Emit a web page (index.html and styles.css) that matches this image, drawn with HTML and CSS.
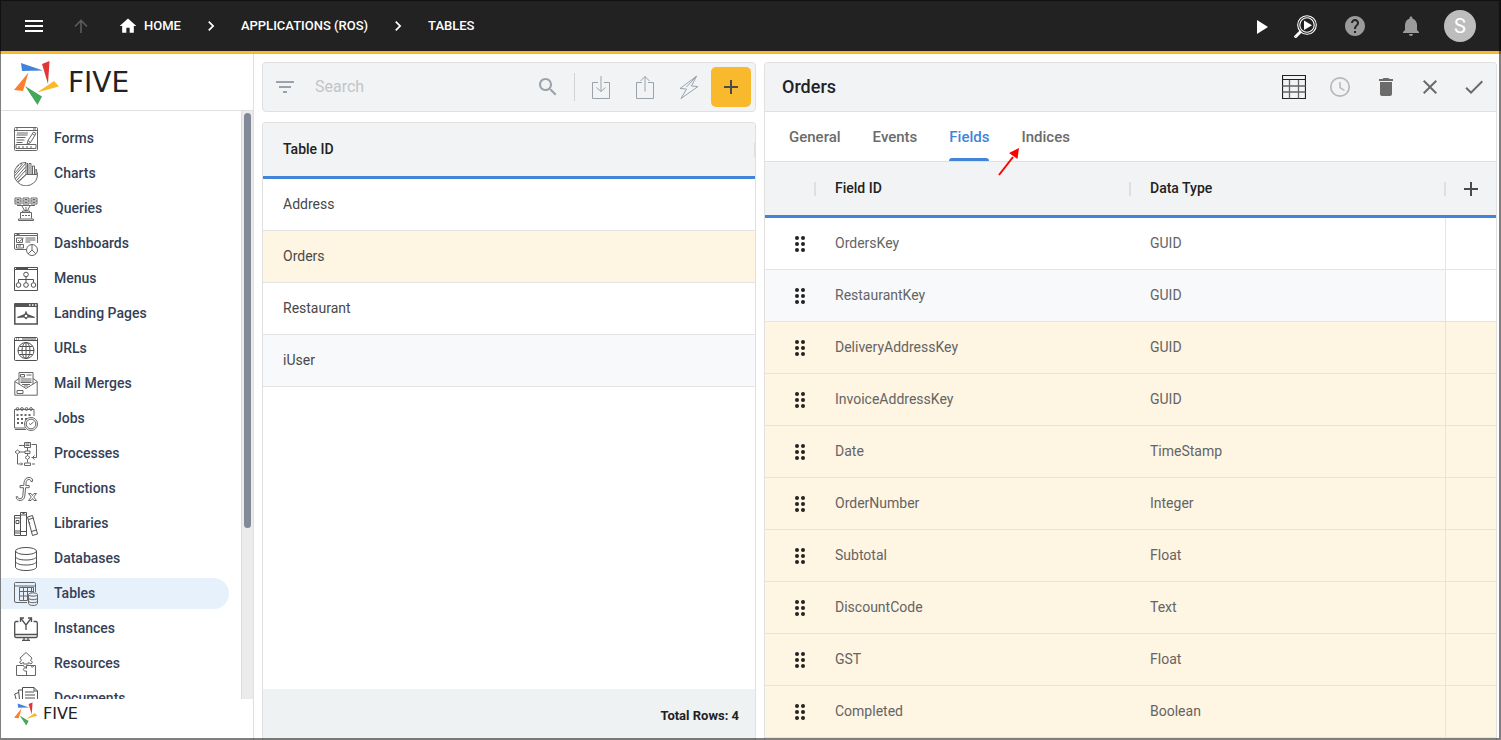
FILE: index.html
```html
<!DOCTYPE html>
<html lang="en">
<head>
<meta charset="utf-8">
<title>Five - Tables</title>
<link rel="stylesheet" href="styles.css">
</head>
<body>
<svg class="defs" aria-hidden="true">
  <symbol id="star" viewBox="0 0 46 46">
    <path fill="#4285d8" d="M7 3 29 10.500 8 11z"/>
    <path fill="#e03636" d="M28 4 35.500 1 34 24z"/>
    <path fill="#f8b92e" d="M23 32.500 40 21 45 26.500z"/>
    <path fill="#43a85a" d="M11 26 28 36.500 23.500 45z"/>
    <path fill="#fb7f2c" d="M14.500 12.500 0 30 9 31z"/>
  </symbol>
  <symbol id="grip" viewBox="0 0 10 16">
    <circle cx="2" cy="2" r="2"/><circle cx="8" cy="2" r="2"/><circle cx="2" cy="8" r="2"/><circle cx="8" cy="8" r="2"/><circle cx="2" cy="14" r="2"/><circle cx="8" cy="14" r="2"/>
  </symbol>
</svg>

<header class="topbar">
  <button class="icon-btn" aria-label="Menu"><svg class="i24 fill" viewBox="0 0 24 24"><path d="M3 18h18v-2H3v2zm0-5h18v-2H3v2zm0-7v2h18V6H3z"/></svg></button>
  <button class="icon-btn dim" aria-label="Up"><svg class="i24 line" viewBox="0 0 24 24"><path d="M12 19V7M6 12.500 12 6.500l6 6" stroke-width="1.600"/></svg></button>
  <nav class="crumbs" aria-label="Breadcrumb">
    <a href="#" class="home"><svg class="i20 fill" viewBox="0 0 24 24"><path d="M10 20v-6h4v6h5v-8h3L12 3 2 12h3v8z"/></svg>HOME</a>
    <svg class="i20 fill" viewBox="0 0 24 24"><path d="M10 6 8.590 7.410 13.170 12l-4.580 4.590L10 18l6-6z"/></svg>
    <a href="#">APPLICATIONS (ROS)</a>
    <svg class="i20 fill" viewBox="0 0 24 24"><path d="M10 6 8.590 7.410 13.170 12l-4.580 4.590L10 18l6-6z"/></svg>
    <a href="#">TABLES</a>
  </nav>
  <div class="top-actions">
    <button class="icon-btn" aria-label="Run"><svg class="i24 fill" viewBox="0 0 24 24"><path d="M8 6v14l11-7z"/></svg></button>
    <button class="icon-btn" aria-label="Inspect"><svg class="i24 line" viewBox="0 0 24 24"><circle cx="14" cy="11" r="9.300" stroke-width="1.100"/><circle cx="14" cy="11" r="7.200" stroke-width="1.100"/><path d="M7.500 16.500 1.500 22.500l1.200 1.300 6-6M8 17l-5 5.500" stroke-width="1.100"/><path d="M11 6.500v9.500l8-4.800z" fill="currentColor" stroke="none"/></svg></button>
    <button class="icon-btn muted" aria-label="Help"><svg class="i24 fill" viewBox="0 0 24 24"><path d="M12 2C6.480 2 2 6.480 2 12s4.480 10 10 10 10-4.480 10-10S17.520 2 12 2zm1 17h-2v-2h2v2zm2.070-7.750-.9.920C13.450 12.900 13 13.500 13 15h-2v-.5c0-1.100.450-2.100 1.170-2.830l1.240-1.260c.370-.360.590-.860.590-1.410 0-1.100-.9-2-2-2s-2 .9-2 2H8c0-2.210 1.790-4 4-4s4 1.790 4 4c0 .880-.360 1.680-.930 2.250z"/></svg></button>
    <button class="icon-btn muted" aria-label="Notifications"><svg class="i24 fill" viewBox="0 0 24 24"><path d="M12 22c1.100 0 2-.9 2-2h-4c0 1.100.890 2 2 2zm6-6v-5c0-3.070-1.640-5.640-4.500-6.320V4c0-.830-.670-1.500-1.500-1.500s-1.500.670-1.500 1.500v.680C7.630 5.360 6 7.920 6 11v5l-2 2v1h16v-1l-2-2z"/></svg></button>
    <button class="avatar" aria-label="Account">S</button>
  </div>
</header>

<div class="layout">
  <aside class="sidebar">
    <div class="brand"><svg class="star-lg"><use href="#star"/></svg><span class="word-lg">FIVE</span></div>
    <div class="nav-area">
      <nav class="nav" aria-label="Sections">
        <a href="#"><svg class="i24 thin" viewBox="0 0 24 24"><rect x=".5" y=".5" width="23" height="23" rx="1"/><path d="M.5 3.500h23M2 2h2M19 2h3M3 6h11M2.500 8h11M2.500 10.500h9M2.500 13h8M2.500 15.500h6M13 17.500l1-4L19.500 5l2.500 1.500-5.500 9zM14 13.500l2.500 2M18.500 7l2.500 1.500M2 17.500h20v4H2zM4 20h2M8 20h2M12 20h2M16 20h2"/></svg>Forms</a>
        <a href="#"><svg class="i24 thin" viewBox="0 0 24 24"><path d="M23.500 12.500A11.500 11.500 0 0 1 4 20.500L12 12.500z"/><path d="M3.500 20A11.500 11.500 0 0 1 12 .5v12zM1 11 8.500 2M.5 14 12 1M1.500 16.500 12 4.500M2.500 18.500 12 8M6 2l2-1M3 5l2-2"/><path d="M13.500 12V1M15 12V1.500h2V12M18.500 12V4h2v8M22 12V7l1.500 5z"/></svg>Charts</a>
        <a href="#"><svg class="i24 thin" viewBox="0 0 24 24"><path d="M1 1h6v6H1zM9 1h6v6H9zM17 1h6v6h-6zM1 4h6M9 4h6M17 4h6M2.500 2.500h3M10.500 2.500h3M18.500 2.500h3M2.500 5.500h3M10.500 5.500h3M18.500 5.500h3M3 8.500h18M8 9l2.500 4.500h3L16 9M12 10v4M6.500 21.500v-6h11v6M8.500 15v-1h7v1M8 18.500h2M11 18.500h2M14 18.500h2M4.500 22h15v1.500h-15z"/></svg>Queries</a>
        <a href="#"><svg class="i24 thin" viewBox="0 0 24 24"><path d="M12 17.500H2A1.500 1.500 0 0 1 .5 16V1.500H23.500V11M.5 3.500h23M2.500 2.500h3M2.500 6h6v4.500h-6zM4 8l1.500 1.500L9.500 6M2.500 12.500h7V16h-7zM4 14h3M11.500 6h10M11.500 8h10M11.500 10h5"/><circle cx="18" cy="18" r="5.500"/><path d="M18 12.500V18l-4 4M18 18l4 4"/></svg>Dashboards</a>
        <a href="#"><svg class="i24 thin dark" viewBox="0 0 24 24"><path d="M.5.5h23v23H.5zM.5 2.500h23M2 1.500h12M12 9.500v6M4.500 15.500v-3h15v3" /><circle cx="12" cy="7.500" r="2.300"/><circle cx="4.500" cy="18" r="2.300"/><circle cx="12" cy="18" r="2.300"/><circle cx="19.500" cy="18" r="2.300"/></svg>Menus</a>
        <a href="#"><svg class="i24 thin dark" viewBox="0 0 24 24"><path d="M.8 5v17h22.400V5" stroke-width="1.500"/><path d="M0 5V2a1 1 0 0 1 1-1h22a1 1 0 0 1 1 1v3z" fill="currentColor" stroke="none"/><path d="M15 3h1.500M18 3h1.500M21 3h1.500" stroke="#fff" stroke-width="1.500"/><path d="M12 8.500l1.500 3.500 7.500 3-.5 1-6.500-.5-2 2-2-2-6.500.5-.5-1 7.500-3z" fill="currentColor" stroke="none"/><circle cx="12" cy="14" r="1.300" fill="#fff" stroke="none"/></svg>Landing Pages</a>
        <a href="#"><svg class="i24 thin dark" viewBox="0 0 24 24"><rect x=".5" y=".5" width="23" height="23" rx="1"/><path d="M.5 3.500h23M2 2h1M4 2h1" /><path d="M8 2h14" stroke-width="2" stroke="#aaa"/><circle cx="12" cy="13.500" r="8"/><ellipse cx="12" cy="13.500" rx="4" ry="8"/><path d="M12 5.500v16M4 13.500h16M5.500 9.500h13M5.500 17.500h13"/></svg>URLs</a>
        <a href="#"><svg class="i24 thin" viewBox="0 0 24 24"><path d="M5 6.500.8 9.500v13.700h22.400V9.500L19 6.500M.8 9.500 12 16.500l11.200-7M5 12V.5h14V12M6.500 2.500h4v2.500h-4zM12.500 3h5M6.500 7h11M6.500 9h11M6.500 10.500h11M8 12.500h8M10 14h4M3 18.500h6v3H3z"/></svg>Mail Merges</a>
        <a href="#"><svg class="i24 thin" viewBox="0 0 24 24"><path d="M11 21H.5V2.500H20V9M1 22.500h11"/><path d="M2.500 8h3M6.500 8h3M10.500 8h3M14.500 8h3M3 12h2M7 12h2M11 12h2M3 16h2M7 16h2" stroke-width="2" stroke-dasharray="2 1"/><circle cx="3.500" cy="2" r="1.400"/><circle cx="8" cy="2" r="1.400"/><circle cx="12.500" cy="2" r="1.400"/><circle cx="17" cy="2" r="1.400"/><circle cx="17" cy="17" r="6.500" fill="#fff"/><circle cx="17" cy="17" r="4.800"/><path d="M15 16.500l1.500 1 3-2.500"/></svg>Jobs</a>
        <a href="#"><svg class="i24 thin" viewBox="0 0 24 24"><path d="M10.500.5h6v5h-6zM11.500 2h4M11.500 3.500h4M5 3.500h5M17.500 2.500h5v13M22.500 15.500h-5M13.500 6v3M11 9h5v2.500h-5zM6 10h5M3.500 8 6 10 3.500 12 1 10zM3.500 12v10h5M7 20.500 8.500 22 7 23.500M13.500 12v2M13.500 13.500l2.500 2-2.500 2-2.500-2zM13.500 18v2.500M10.500 21h6v2.500h-6zM18 22h3M20.500 13.500l-2 2 2 2"/></svg>Processes</a>
        <a href="#"><svg class="i24 thin" viewBox="0 0 24 24"><path d="M18.500 4.500V3c0-1.500-1.500-2.500-3.500-2.500-3 0-4.500 2-5 5L9.800 8.500H6v2.200h3.500l-.7 8c-.2 2-1.200 3-2.800 3-1.300 0-2.200-.6-2.300-2H2.200c0 2.500 1.500 3.800 3.800 3.800 3 0 4.500-1.800 4.800-4.500l.8-8.300h3.600V8.500h-3.400l.3-3c.2-2 1.200-3 2.900-3 1.200 0 1.800.6 1.900 2zM14.500 16.500H17l1.500 2 1.500-2h2.500L19.700 20l2.800 3.500H20l-1.500-2-1.500 2h-2.500l2.800-3.500z"/></svg>Functions</a>
        <a href="#"><svg class="i24 thin dark" viewBox="0 0 24 24"><path d="M.5 3.500h6v20h-6zM.5 6h6M.5 19h6M.5 21h6M2 8.500h3v3H2zM6.500.5h6v23h-6zM6.500 3h6M6.500 19.500h6M13.500 5l5-1.500L23.500 22l-5 1.500zM14.500 7.500l5-1.500M17.500 19.500l5-1.500M15 10l1 1.500M8.500 1.500h2"/></svg>Libraries</a>
        <a href="#"><svg class="i24 thin dark" viewBox="0 0 24 24"><ellipse cx="12" cy="4" rx="10.500" ry="3.500"/><path d="M1.500 4v16c0 2 4.700 3.500 10.500 3.500S22.500 22 22.500 20V4M1.500 9.500c0 2 4.700 3.500 10.500 3.500s10.500-1.500 10.500-3.500M1.500 14.500c0 2 4.700 3.500 10.500 3.500s10.500-1.500 10.500-3.500"/></svg>Databases</a>
        <a href="#" class="active" aria-current="page"><svg class="i24 thin" viewBox="0 0 24 24"><path d="M13 20.500H2A1.500 1.500 0 0 1 .5 19V1.500a1 1 0 0 1 1-1h19a1 1 0 0 1 1 1V10M.5 4h21M5.500 5.500v13h8M9.500 5.500v13M13.500 5.500v13M17.500 5.500v5M5.500 5.500h14v5M5.500 9.500h14M5.500 14h8"/><path d="M14.500 13v8.500c0 1 2 2 4.500 2s4.500-1 4.500-2V13" fill="#e7f1fc"/><ellipse cx="19" cy="12.500" rx="4.500" ry="1.700" fill="#e7f1fc"/><path d="M14.500 16c0 1 2 1.700 4.500 1.700s4.500-.7 4.500-1.700M14.500 19c0 1 2 1.700 4.500 1.700s4.500-.7 4.500-1.700"/></svg>Tables</a>
        <a href="#"><svg class="i24 thin dark" viewBox="0 0 24 24"><path d="M4.500 4.500H2A1.500 1.500 0 0 0 .7 6v13A1.500 1.500 0 0 0 2 20.500h20a1.500 1.500 0 0 0 1.300-1.500V6A1.500 1.500 0 0 0 22 4.500h-2.500M.7 17.500h22.600M10 21v2M14 21v2M8 23.500h8M12 13V8L7 1.500M12 8l5-6.500M6.500 5V1H10M14 1h3.500v4" stroke-width="1.300"/></svg>Instances</a>
        <a href="#"><svg class="i24 thin" viewBox="0 0 24 24"><path d="M12 .5 18 6l-1.500 2.500 2 1.500-1.500 2-2.500-1.500c-.5 0-.5 1 0 1.500h-5c.5-1 .5-1.500-.5-1.500L7 12 5.500 10l2-1.500L6 6zM2.500 13.500h7c-.5 2 3.500 2 3 0h9v10h-19zM12.500 14v2.500M12.500 16c-3-1-4.500 2.500-1.500 3h1.500v4M17 14.500c1.500 1.500 3 0 3-1"/></svg>Resources</a>
        <a href="#"><svg class="i24 thin dark" viewBox="0 0 24 24"><path d="M8.500.5H20l3.500 3.500v17h-15zM20 .5V4h3.500M11 5h9M11 8h10M11 11h10M8.500 3H4.500l2 19M4.500 5.500.7 7l4 15"/></svg>Documents</a>
      </nav>
      <div class="track"><div class="thumb"></div></div>
    </div>
    <footer class="brand-small"><svg class="star-sm"><use href="#star"/></svg><span class="word-sm">FIVE</span></footer>
  </aside>

  <main class="panels">
    <section class="list-col">
      <div class="searchbar">
        <button class="icon-btn steel" aria-label="Filter"><svg class="i24 fill" viewBox="0 0 24 24"><path d="M10 18h4v-2h-4v2zM3 6v2h18V6H3zm3 7h12v-2H6v2z"/></svg></button>
        <input class="search" type="text" placeholder="Search" aria-label="Search">
        <button class="icon-btn steel" aria-label="Search"><svg class="i24 fill" viewBox="0 0 24 24"><path d="M15.500 14h-.790l-.280-.270C15.410 12.590 16 11.110 16 9.500 16 5.910 13.090 3 9.500 3S3 5.910 3 9.500 5.910 16 9.500 16c1.610 0 3.090-.590 4.230-1.570l.270.280v.790l5 4.990L20.490 19l-4.990-5zm-6 0C7.010 14 5 11.990 5 9.500S7.010 5 9.500 5 14 7.010 14 9.500 11.990 14 9.500 14z"/></svg></button>
        <span class="divider"></span>
        <div class="tools">
          <button class="icon-btn steel" aria-label="Import"><svg class="i24 line" viewBox="0 0 24 24"><path d="M9 7.500H3.500v16h17v-16H15M12 1v15.500M7.500 12.500l4.500 4 4.500-4"/></svg></button>
          <button class="icon-btn steel" aria-label="Export"><svg class="i24 line" viewBox="0 0 24 24"><path d="M9 7.500H3.500v16h17v-16H15M12 16.500V1.500M7.500 6 12 1.500 16.500 6"/></svg></button>
          <button class="icon-btn steel" aria-label="Actions"><svg class="i24 line" viewBox="0 0 24 24"><path d="M19.500 1.200 3 13.500l6.500.5L4 23.500 21 11.500l-6.500-.5zM19.500 1.200 9.500 12"/></svg></button>
        </div>
        <button class="add" aria-label="Add"><svg class="i24 fill" viewBox="0 0 24 24"><path d="M19 13h-6v6h-2v-6H5v-2h6V5h2v6h6z"/></svg></button>
      </div>
      <div class="card list-card">
        <table class="grid">
          <thead><tr><th scope="col" class="handle">Table ID</th></tr></thead>
          <tbody>
            <tr><td>Address</td></tr>
            <tr class="warm"><td>Orders</td></tr>
            <tr><td>Restaurant</td></tr>
            <tr class="cool"><td>iUser</td></tr>
          </tbody>
        </table>
        <div class="total">Total Rows: 4</div>
      </div>
    </section>

    <section class="card detail">
      <div class="detail-head">
        <h1>Orders</h1>
        <div class="detail-actions">
          <button class="icon-btn ink" aria-label="Data"><svg class="i24 line" viewBox="0 0 24 24"><path d="M.5.500h23v23H.5z" stroke-width="1.200"/><path d="M.5 4.500h23"/><path d="M.5 11h23M.5 17h23M7.500 5v18.500M16.500 5v18.500" stroke="#666" stroke-width="1.300"/></svg></button>
          <button class="icon-btn faint" aria-label="History"><svg class="i24 line" viewBox="0 0 24 24"><circle cx="12" cy="12" r="9.200" stroke-width="1.700"/><path d="M12 7v5.500l4.500 3" stroke-width="1.500"/></svg></button>
          <button class="icon-btn gray" aria-label="Delete"><svg class="i24 fill" viewBox="0 0 24 24"><path d="M6 19c0 1.100.9 2 2 2h8c1.100 0 2-.9 2-2V7H6v12zM19 4h-3.500l-1-1h-5l-1 1H5v2h14V4z"/></svg></button>
          <button class="icon-btn gray" aria-label="Close"><svg class="i24 fill" viewBox="0 0 24 24"><path d="M19 6.410 17.590 5 12 10.590 6.410 5 5 6.410 10.590 12 5 17.590 6.410 19 12 13.410 17.590 19 19 17.590 13.410 12z"/></svg></button>
          <button class="icon-btn gray" aria-label="Save"><svg class="i24 fill" viewBox="0 0 24 24"><path d="M9 16.170 4.830 12l-1.420 1.410L9 19 21 7l-1.410-1.410z"/></svg></button>
        </div>
      </div>
      <div class="tabs" role="tablist">
        <button role="tab">General</button>
        <button role="tab">Events</button>
        <button role="tab" class="on" aria-selected="true">Fields</button>
        <button role="tab">Indices</button>
        <svg class="pointer" viewBox="0 0 22 28"><path d="M1 27 15 9" stroke="#f00" stroke-width="2"/><path d="M21 0 19.500 11 11 5z" fill="#f00"/></svg>
      </div>
      <table class="grid fields">
        <colgroup><col class="c-grip"><col><col><col class="c-add"></colgroup>
        <thead><tr><th class="handle"></th><th scope="col" class="handle">Field ID</th><th scope="col" class="handle">Data Type</th><th class="add-cell"><button class="icon-btn" aria-label="Add field"><svg class="i24 fill" viewBox="0 0 24 24"><path d="M19 13h-6v6h-2v-6H5v-2h6V5h2v6h6z"/></svg></button></th></tr></thead>
        <tbody>
          <tr><td><svg class="grip"><use href="#grip"/></svg></td><td>OrdersKey</td><td>GUID</td><td></td></tr>
          <tr class="cool"><td><svg class="grip"><use href="#grip"/></svg></td><td>RestaurantKey</td><td>GUID</td><td></td></tr>
          <tr class="warm"><td><svg class="grip"><use href="#grip"/></svg></td><td>DeliveryAddressKey</td><td>GUID</td><td></td></tr>
          <tr class="warm"><td><svg class="grip"><use href="#grip"/></svg></td><td>InvoiceAddressKey</td><td>GUID</td><td></td></tr>
          <tr class="warm"><td><svg class="grip"><use href="#grip"/></svg></td><td>Date</td><td>TimeStamp</td><td></td></tr>
          <tr class="warm"><td><svg class="grip"><use href="#grip"/></svg></td><td>OrderNumber</td><td>Integer</td><td></td></tr>
          <tr class="warm"><td><svg class="grip"><use href="#grip"/></svg></td><td>Subtotal</td><td>Float</td><td></td></tr>
          <tr class="warm"><td><svg class="grip"><use href="#grip"/></svg></td><td>DiscountCode</td><td>Text</td><td></td></tr>
          <tr class="warm"><td><svg class="grip"><use href="#grip"/></svg></td><td>GST</td><td>Float</td><td></td></tr>
          <tr class="warm"><td><svg class="grip"><use href="#grip"/></svg></td><td>Completed</td><td>Boolean</td><td></td></tr>
        </tbody>
      </table>
    </section>
  </main>
</div>
<div class="frame"></div>
</body>
</html>
```
FILE: styles.css
```css
* { box-sizing: border-box; }
body {
  margin: 0;
  height: 100vh;
  display: flex;
  flex-direction: column;
  overflow: hidden;
  background: #fff;
  color: #222;
  font-family: Roboto, "Liberation Sans", sans-serif;
  font-size: 14px;
  line-height: 20px;
}
button, input { font: inherit; color: inherit; background: none; border: 0; padding: 0; margin: 0; }
a { color: inherit; text-decoration: none; }
svg { display: block; flex: none; }
.defs { position: absolute; width: 0; height: 0; }
.i24 { width: 24px; height: 24px; }
.i20 { width: 20px; height: 20px; }
.fill { fill: currentColor; }
.line { fill: none; stroke: currentColor; }
.thin { fill: none; stroke: #666; color: #555; }
.thin.dark { stroke: #505050; }
.icon-btn { display: flex; flex: none; }
.steel { color: #9aa3ab; }
.gray { color: #6b6b6b; }
.faint { color: #b5b7b9; }
.ink { color: #222; }

.frame {
  position: fixed;
  inset: 0;
  border: solid rgba(0, 0, 0, 0.5);
  border-width: 1px 2px 2px 1px;
  pointer-events: none;
}

.topbar {
  flex: none;
  display: flex;
  align-items: center;
  height: 54px;
  padding: 0 25px 0 22px;
  gap: 23px;
  background: #222;
  border-bottom: 3px solid #fcb827;
  color: #fff;
}
.topbar .dim { color: #5c5c5c; }
.topbar .muted { color: #9b9b9b; }
.crumbs {
  display: flex;
  align-items: center;
  gap: 20px;
  padding: 1px 0 0 2px;
  font-size: 13px;
  font-weight: 500;
}
.home { display: flex; align-items: center; gap: 6px; }
.top-actions { display: flex; align-items: center; margin-left: auto; gap: 20px; }
.top-actions .muted { margin-left: 6px; }
.top-actions .muted + .muted { margin-left: 12px; }
.avatar {
  width: 32px;
  height: 32px;
  margin-left: 1px;
  border-radius: 50%;
  background: #bdbdbd;
  font-size: 20px;
}

.layout { flex: 1; min-height: 0; display: flex; }
.sidebar {
  width: 254px;
  flex: none;
  display: flex;
  flex-direction: column;
  border-right: 1px solid #e0e0e0;
  padding-left: 1px;
}
.brand {
  display: flex;
  align-items: center;
  gap: 8px;
  height: 57px;
  padding: 2px 0 0 13px;
  border-bottom: 1px solid #e0e0e0;
}
.star-lg { width: 46px; height: 46px; }
.word-lg, .word-sm { font-family: "DejaVu Sans", sans-serif; color: #222; }
.word-lg { font-size: 28px; line-height: 32px; }
.word-sm { font-size: 16px; line-height: 24px; }
.star-sm { width: 24px; height: 24px; }
.nav-area { flex: 1; min-height: 0; display: flex; }
.nav {
  flex: 1;
  display: flex;
  flex-direction: column;
  gap: 4px;
  padding: 12px 12px 0 0;
  overflow: hidden;
}
.nav a {
  flex: none;
  display: flex;
  gap: 16px;
  height: 31px;
  padding-left: 13px;
  border-radius: 0 16px 16px 0;
  font-weight: 500;
  line-height: 30px;
  color: #343f58;
}
.nav svg { margin-top: 4px; }
.nav .active { background: #e7f1fc; }
.track { width: 12px; padding: 2px; background: #ebebeb; border-left: 1px solid #dcdcdc; }
.thumb { height: 71%; border-radius: 4px; background: #828998; }
.brand-small {
  display: flex;
  align-items: flex-start;
  gap: 5px;
  height: 41px;
  padding: 3px 0 0 13px;
}

.panels {
  flex: 1;
  min-width: 0;
  display: grid;
  grid-template-columns: 494fr 733fr;
  gap: 8px;
  padding: 8px 4px 0 8px;
}
.list-col { display: flex; flex-direction: column; gap: 10px; min-width: 0; min-height: 0; }
.searchbar {
  display: flex;
  align-items: center;
  height: 50px;
  padding: 0 4px 0 10px;
  background: #f1f3f5;
  border: 1px solid #e0e0e0;
  border-radius: 4px;
}
.search { flex: 1; min-width: 0; margin: 0 18px; font-size: 16px; outline: 0; }
.search::placeholder { color: #c2c5c8; opacity: 1; }
.divider { width: 1px; height: 28px; margin: 0 14px; background: #d0d3d6; }
.tools { display: flex; gap: 20px; }
.add {
  display: flex;
  align-items: center;
  justify-content: center;
  width: 40px;
  height: 40px;
  margin-left: 10px;
  border-radius: 5px;
  background: #f8b92c;
  color: #4a4a4a;
}
.card { border: 1px solid #e0e0e0; border-bottom: 0; border-radius: 4px 4px 0 0; overflow: hidden; }
.list-card { flex: 1; min-height: 0; display: flex; flex-direction: column; }
.grid { width: 100%; border-collapse: separate; border-spacing: 0; table-layout: fixed; }
.grid th {
  position: relative;
  height: 56px;
  padding: 0 20px 2px;
  text-align: left;
  font-weight: 500;
  background: #f1f3f5;
  border-bottom: 3px solid #4285d8;
}
.handle::after {
  content: "";
  position: absolute;
  right: -1px;
  top: 20px;
  width: 2px;
  height: 14px;
  background: #dedfe1;
  z-index: 1;
}
.grid td { height: 52px; padding: 0 20px 2px; border-bottom: 1px solid #e3e4e6; color: #484848; }
.warm td { background: #fff5e3; }
.cool td { background: #f8f9fb; }
.total {
  margin-top: auto;
  height: 51px;
  padding: 17px 16px 0 0;
  background: #eef2f3;
  font-size: 13px;
  font-weight: 700;
  text-align: right;
}

.detail { min-width: 0; min-height: 0; }
.detail-head {
  display: flex;
  align-items: center;
  height: 49px;
  padding: 0 10px 0 17px;
  background: #f1f3f5;
  border-bottom: 1px solid #e0e0e0;
}
h1 { margin: 0; font-size: 18px; font-weight: 500; }
.detail-actions { display: flex; gap: 20px; margin-left: auto; }
.detail-actions .ink, .detail-actions .faint { margin-right: 2px; }
.tabs {
  position: relative;
  display: flex;
  gap: 32px;
  height: 50px;
  padding: 0 24px;
  border-bottom: 1px solid #e0e0e0;
  font-size: 15px;
}
.tabs button { position: relative; font-weight: 500; color: #6b6b6b; }
.tabs .on { color: #4285d8; }
.tabs .on::after {
  content: "";
  position: absolute;
  left: 0;
  right: 0;
  bottom: 0;
  height: 3px;
  border-radius: 3px 3px 0 0;
  background: #4285d8;
}
.pointer { position: absolute; left: 233px; top: 36px; width: 22px; height: 28px; z-index: 2; }
.c-grip { width: 50px; }
.c-add { width: 51px; }
.fields td { color: #646464; }
.fields td:first-child { padding: 0 0 0 30px; }
.fields td:last-child { border-left: 1px solid #e3e4e6; }
.fields .cool td:last-child { background: #fff; }
.grip { width: 10px; height: 16px; fill: #222; }
.grid .add-cell { padding: 0 14px; color: #4a4a4a; }
```
